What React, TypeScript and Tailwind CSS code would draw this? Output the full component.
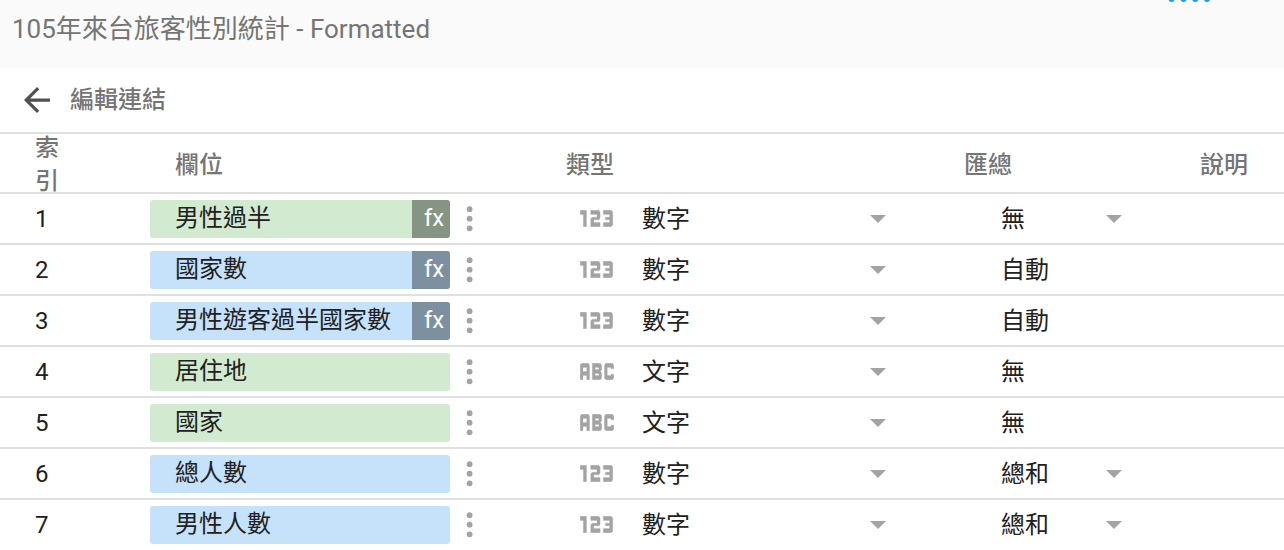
import { Md123, MdAbc, MdArrowBack, MdArrowDropDown } from "react-icons/md";

type Kind = "dimension" | "metric";

interface Field {
  name: string;
  kind: Kind;
  formula?: boolean;
  type: "數字" | "文字";
  aggregation: string;
  editable?: boolean;
}

const fields: Field[] = [
  { name: "男性過半", kind: "dimension", formula: true, type: "數字", aggregation: "無", editable: true },
  { name: "國家數", kind: "metric", formula: true, type: "數字", aggregation: "自動" },
  { name: "男性遊客過半國家數", kind: "metric", formula: true, type: "數字", aggregation: "自動" },
  { name: "居住地", kind: "dimension", type: "文字", aggregation: "無" },
  { name: "國家", kind: "dimension", type: "文字", aggregation: "無" },
  { name: "總人數", kind: "metric", type: "數字", aggregation: "總和", editable: true },
  { name: "男性人數", kind: "metric", type: "數字", aggregation: "總和", editable: true },
];

const chipColor: Record<Kind, string> = {
  dimension: "bg-[#d2ead0]",
  metric: "bg-[#c5e2fa]",
};

const formulaColor: Record<Kind, string> = {
  dimension: "bg-[#869483]",
  metric: "bg-[#7d909f]",
};

function TypeIcon({ type }: { type: Field["type"] }) {
  const numeric = type === "數字";
  const Icon = numeric ? Md123 : MdAbc;
  return (
    <Icon
      viewBox={numeric ? "3.9 8.9 16.2 6.2" : "2.9 8.9 18.2 6.2"}
      preserveAspectRatio="none"
      stroke="currentColor"
      strokeWidth="0.1"
      className="h-[17px] w-[34px] shrink-0 text-[#a3a3a3]"
      aria-hidden="true"
    />
  );
}

function Dropdown({ label, value, options, className }: { label: string; value: string; options: string[]; className: string }) {
  return (
    <span className={`grid items-center ${className}`}>
      <select
        aria-label={label}
        defaultValue={value}
        className="col-start-1 row-start-1 h-9 w-full appearance-none bg-transparent outline-none"
      >
        {options.map((option) => (
          <option key={option}>{option}</option>
        ))}
      </select>
      <MdArrowDropDown
        viewBox="7 10 10 5"
        className="pointer-events-none col-start-1 row-start-1 h-2 w-4 justify-self-end text-[#a3a3a3]"
        aria-hidden="true"
      />
    </span>
  );
}

function FieldRow({ field, index }: { field: Field; index: number }) {
  return (
    <tr className="h-[51px]">
      <td className="border-t-2 border-[#e0e0e0] pl-[35px]">{index}</td>
      <td className="border-t-2 border-[#e0e0e0]">
        <div className="flex items-center">
          <div className={`flex h-[38px] w-[300px] items-stretch overflow-hidden rounded-[3px] ${chipColor[field.kind]}`}>
            <span className="flex-1 pl-[25px] leading-9">{field.name}</span>
            {field.formula && (
              <span className={`w-[38px] pl-3 leading-9 text-white ${formulaColor[field.kind]}`}>fx</span>
            )}
          </div>
          <button type="button" aria-label={`${field.name} 選項`} className="ml-4 text-[#a3a3a3]">
            <svg viewBox="0 0 8 26" className="h-[26px] w-2" fill="currentColor" aria-hidden="true">
              <circle cx="3.6" cy="3.2" r="2.9" />
              <circle cx="3.6" cy="12.7" r="2.9" />
              <circle cx="3.6" cy="22.3" r="2.9" />
            </svg>
          </button>
        </div>
      </td>
      <td className="border-t-2 border-[#e0e0e0]">
        <div className="flex items-center pl-[14px]">
          <TypeIcon type={field.type} />
          <Dropdown label={`${field.name} 類型`} value={field.type} options={["數字", "文字"]} className="ml-7 w-[244px]" />
        </div>
      </td>
      <td className="border-t-2 border-[#e0e0e0] pl-[37px]">
        {field.editable ? (
          <Dropdown label={`${field.name} 匯總`} value={field.aggregation} options={["無", "總和"]} className="w-[121px]" />
        ) : (
          <span className="block pt-[2px] leading-[33px]">{field.aggregation}</span>
        )}
      </td>
      <td className="border-t-2 border-[#e0e0e0]" />
    </tr>
  );
}

export default function App() {
  return (
    <main className="bg-white font-['Roboto','Noto_Sans_CJK_TC',sans-serif] text-[24px] text-[#212121]">
      <header className="flex h-[68px] items-start justify-between bg-[#fafafa] pl-3 pr-[72px]">
        <h1 className="pt-3 text-[26px] leading-[34px] text-[#757575]">105年來台旅客性別統計 - Formatted</h1>
        <svg viewBox="0 0 44 3" className="h-[3px] w-11" fill="#2196f3" aria-hidden="true">
          <circle cx="3.5" cy="-1" r="3" />
          <circle cx="15.5" cy="-1" r="3" />
          <circle cx="27.3" cy="-1" r="3" />
          <circle cx="39" cy="-1" r="3" />
        </svg>
      </header>

      <nav className="flex h-16 items-center pl-6">
        <a href="#connection" className="flex items-center gap-5 font-medium text-[#757575]">
          <MdArrowBack viewBox="4 4 16 16" className="h-[26px] w-[26px] text-[#505050]" aria-hidden="true" />
          編輯連結
        </a>
      </nav>

      <table className="w-full table-fixed border-separate border-spacing-0 text-left">
        <colgroup>
          <col className="w-[150px]" />
          <col className="w-[416px]" />
          <col className="w-[398px]" />
          <col className="w-[236px]" />
          <col />
        </colgroup>
        <thead className="text-[#757575]">
          <tr className="h-[60px]">
            <th scope="col" className="border-t-2 border-[#e0e0e0] pl-[35px] font-medium">
              <div className="flex h-[58px] w-6 items-center pt-1 leading-[33px]">索引</div>
            </th>
            <th scope="col" className="border-t-2 border-[#e0e0e0] pl-[25px] pt-[3px] font-medium">欄位</th>
            <th scope="col" className="border-t-2 border-[#e0e0e0] pt-[3px] font-medium">類型</th>
            <th scope="col" className="border-t-2 border-[#e0e0e0] pt-[3px] font-medium">匯總</th>
            <th scope="col" className="border-t-2 border-[#e0e0e0] pt-[3px] font-medium">說明</th>
          </tr>
        </thead>
        <tbody>
          {fields.map((field, i) => (
            <FieldRow key={field.name} field={field} index={i + 1} />
          ))}
        </tbody>
      </table>
    </main>
  );
}
